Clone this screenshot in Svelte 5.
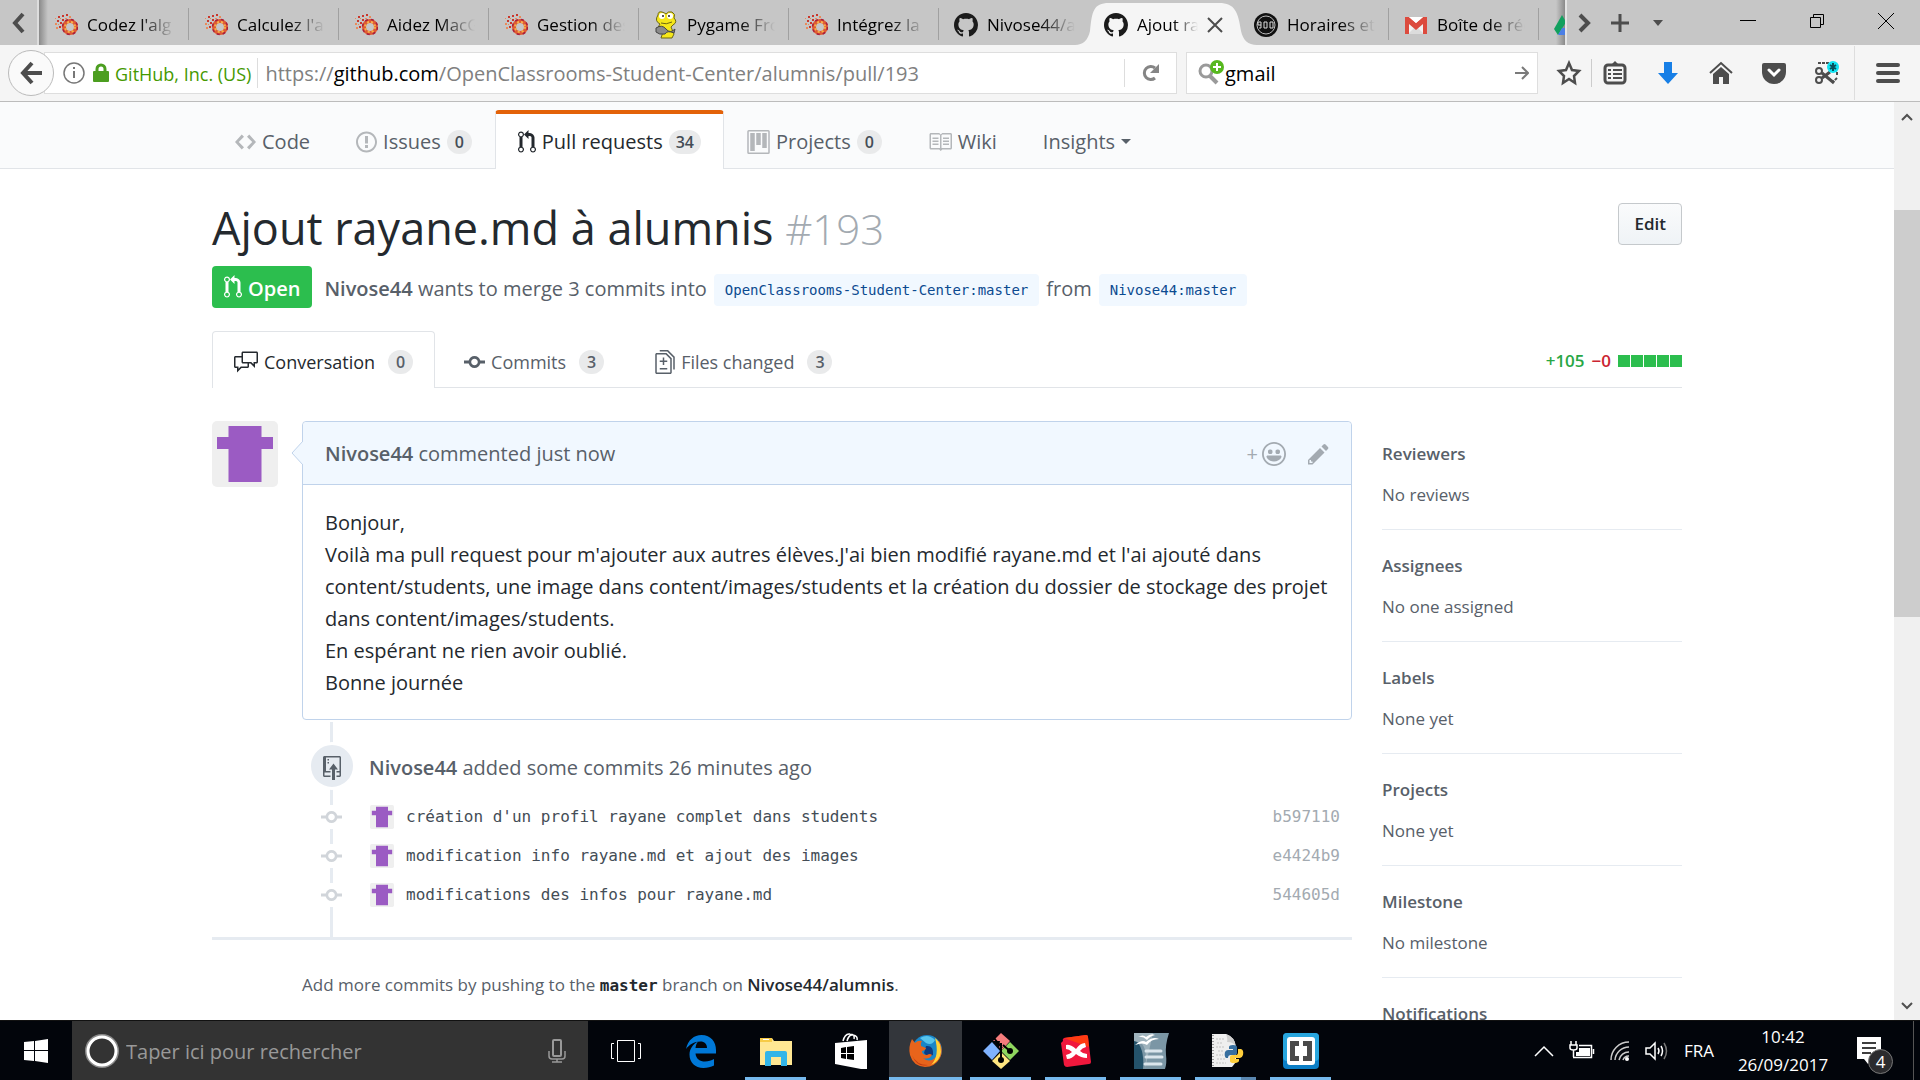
<script>
  const paths = {
    code: [14, 'M9.5 3L8 4.5 11.5 8 8 11.5 9.5 13 14 8 9.5 3zm-5 0L0 8l4.5 5L6 11.5 2.5 8 6 4.5 4.5 3z'],
    issue: [14, 'M7 2.3c3.14 0 5.7 2.56 5.7 5.7s-2.56 5.7-5.7 5.7A5.71 5.71 0 0 1 1.3 8c0-3.14 2.56-5.7 5.7-5.7zM7 1C3.14 1 0 4.14 0 8s3.14 7 7 7 7-3.14 7-7-3.14-7-7-7zm1 3H6v5h2V4zm0 6H6v2h2v-2z'],
    pull: [12, 'M11 11.28V5c-.03-.78-.34-1.47-.94-2.06C9.46 2.35 8.78 2.03 8 2H7V0L4 3l3 3V4h1c.27.02.48.11.69.31.21.2.3.42.31.69v6.28A1.993 1.993 0 0 0 10 15a1.993 1.993 0 0 0 1-3.72zm-1 2.92c-.66 0-1.2-.55-1.2-1.2 0-.65.55-1.2 1.2-1.2.65 0 1.2.55 1.2 1.2 0 .65-.55 1.2-1.2 1.2zM4 3c0-1.11-.89-2-2-2a1.993 1.993 0 0 0-1 3.72v6.56A1.993 1.993 0 0 0 2 15a1.993 1.993 0 0 0 1-3.72V4.72c.59-.34 1-.98 1-1.72zm-.8 10c0 .66-.55 1.2-1.2 1.2-.65 0-1.2-.55-1.2-1.2 0-.65.55-1.2 1.2-1.2.65 0 1.2.55 1.2 1.2zM2 4.2C1.34 4.2.8 3.65.8 3c0-.65.55-1.2 1.2-1.2.65 0 1.2.55 1.2 1.2 0 .65-.55 1.2-1.2 1.2z'],
    project: [15, 'M10 12h3V2h-3v10zm-4-2h3V2H6v8zm-4 4h3V2H2v12zm-1 1h13V1H1v14zM14 0H1a1 1 0 0 0-1 1v14a1 1 0 0 0 1 1h13a1 1 0 0 0 1-1V1a1 1 0 0 0-1-1z'],
    book: [16, 'M3 5h4v1H3V5zm0 3h4V7H3v1zm0 2h4V9H3v1zm11-5h-4v1h4V5zm0 2h-4v1h4V7zm0 2h-4v1h4V9zm2-6v9c0 .55-.45 1-1 1H9.5l-1 1-1-1H2c-.55 0-1-.45-1-1V3c0-.55.45-1 1-1h5.5l1 1 1-1H15c.55 0 1 .45 1 1zm-8 .5L7.5 3H2v9h6V3.5zm7-.5H9.5l-.5.5V12h6V3z'],
    talk: [16, 'M15 1H6c-.55 0-1 .45-1 1v2H1c-.55 0-1 .45-1 1v6c0 .55.45 1 1 1h1v3l3-3h4c.55 0 1-.45 1-1V9h1l3 3V9h1c.55 0 1-.45 1-1V2c0-.55-.45-1-1-1zM9 11H4.5L3 12.5V11H1V5h4v3c0 .55.45 1 1 1h3v2zm6-3h-2v1.5L11.5 8H6V2h9v6z'],
    commit: [14, 'M10.86 7c-.45-1.72-2-3-3.86-3-1.86 0-3.41 1.28-3.86 3H0v2h3.14c.45 1.72 2 3 3.86 3 1.86 0 3.41-1.28 3.86-3H14V7h-3.14zM7 10.2c-1.22 0-2.2-.98-2.2-2.2 0-1.22.98-2.2 2.2-2.2 1.22 0 2.2.98 2.2 2.2 0 1.22-.98 2.2-2.2 2.2z'],
    diff: [13, 'M6 7h2v1H6v2H5V8H3V7h2V5h1v2zm-3 6h5v-1H3v1zM7.5 2L11 5.5V15c0 .55-.45 1-1 1H1c-.55 0-1-.45-1-1V3c0-.55.45-1 1-1h6.5zM10 6L7 3H1v12h9V6zM8.5 0H3v1h5l4 4v8h1V4.5L8.5 0z'],
    smiley: [16, 'M8 0C3.58 0 0 3.58 0 8s3.58 8 8 8 8-3.58 8-8-3.58-8-8-8zm4.81 12.81a6.72 6.72 0 0 1-2.17 1.45c-.83.36-1.72.53-2.64.53-.92 0-1.81-.17-2.64-.53-.81-.34-1.55-.83-2.17-1.45a6.773 6.773 0 0 1-1.45-2.17A6.59 6.59 0 0 1 1.21 8c0-.92.17-1.81.53-2.64.34-.81.83-1.55 1.45-2.17.62-.62 1.36-1.11 2.17-1.45A6.59 6.59 0 0 1 8 1.21c.92 0 1.81.17 2.64.53.81.34 1.55.83 2.17 1.45.62.62 1.11 1.36 1.45 2.17.36.83.53 1.72.53 2.64 0 .92-.17 1.81-.53 2.64-.34.81-.83 1.55-1.45 2.17zM4 6.8v-.59c0-.66.53-1.19 1.2-1.19h.59c.66 0 1.19.53 1.19 1.19v.59c0 .67-.53 1.2-1.19 1.2H5.2C4.53 8 4 7.47 4 6.8zm5 0v-.59c0-.66.53-1.19 1.2-1.19h.59c.66 0 1.19.53 1.19 1.19v.59c0 .67-.53 1.2-1.19 1.2h-.59C9.53 8 9 7.47 9 6.8zm4 3.2c-.72 1.88-2.91 3-5 3s-4.28-1.13-5-3c-.14-.39.23-1 .66-1h8.59c.41 0 .89.61.75 1z'],
    pencil: [14, 'M0 12v3h3l8-8-3-3-8 8zm3 2H1v-2h1v1h1v1zm10.3-9.3L12 6 9 3l1.3-1.3a.996.996 0 0 1 1.41 0l1.59 1.59c.39.39.39 1.02 0 1.41z'],
    push: [12, 'M4 3H3V2h1v1zM3 5h1V4H3v1zm4 0L4 9h2v7h2V9h2L7 5zm4-5H1C.45 0 0 .45 0 1v12c0 .55.45 1 1 1h4v-1H1v-2h4v-1H2V1h9.02L11 10H9v1h2v2H9v1h2c.55 0 1-.45 1-1V1c0-.55-.45-1-1-1z'],
    github: [16, 'M8 0C3.58 0 0 3.58 0 8c0 3.54 2.29 6.53 5.47 7.59.4.07.55-.17.55-.38 0-.19-.01-.82-.01-1.49-2.01.37-2.53-.49-2.69-.94-.09-.23-.48-.94-.82-1.13-.28-.15-.68-.52-.01-.53.63-.01 1.08.58 1.23.82.72 1.21 1.87.87 2.33.66.07-.52.28-.87.51-1.07-1.78-.2-3.64-.89-3.64-3.95 0-.87.31-1.59.82-2.15-.08-.2-.36-1.02.08-2.12 0 0 .67-.21 2.2.82.64-.18 1.32-.27 2-.27.68 0 1.36.09 2 .27 1.53-1.04 2.2-.82 2.2-.82.44 1.1.16 1.92.08 2.12.51.56.82 1.27.82 2.15 0 3.07-1.87 3.75-3.65 3.95.29.25.54.73.54 1.48 0 1.07-.01 1.93-.01 2.2 0 .21.15.46.55.38A8.013 8.013 0 0 0 16 8c0-4.42-3.58-8-8-8z']
  };

  const tabs = [
    { icon: 'oc', title: "Codez l'alg" },
    { icon: 'oc', title: "Calculez l'a" },
    { icon: 'oc', title: 'Aidez MacG' },
    { icon: 'oc', title: 'Gestion des' },
    { icon: 'pygame', title: 'Pygame Fro' },
    { icon: 'oc', title: 'Intégrez la' },
    { icon: 'github', title: 'Nivose44/a' },
    { icon: 'github', title: 'Ajout ra', active: true },
    { icon: 'clock', title: 'Horaires et' },
    { icon: 'gmail', title: 'Boîte de réc' }
  ];

  const repoNav = [
    { icon: 'code', label: 'Code' },
    { icon: 'issue', label: 'Issues', count: 0 },
    { icon: 'pull', label: 'Pull requests', count: 34, active: true },
    { icon: 'project', label: 'Projects', count: 0 },
    { icon: 'book', label: 'Wiki' }
  ];

  const prTabs = [
    { icon: 'talk', label: 'Conversation', count: 0, active: true },
    { icon: 'commit', label: 'Commits', count: 3 },
    { icon: 'diff', label: 'Files changed', count: 3 }
  ];

  const commits = [
    { message: "création d'un profil rayane complet dans students", sha: 'b597110' },
    { message: 'modification info rayane.md et ajout des images', sha: 'e4424b9' },
    { message: 'modifications des infos pour rayane.md', sha: '544605d' }
  ];

  const sidebar = [
    { title: 'Reviewers', value: 'No reviews' },
    { title: 'Assignees', value: 'No one assigned' },
    { title: 'Labels', value: 'None yet' },
    { title: 'Projects', value: 'None yet' },
    { title: 'Milestone', value: 'No milestone' },
    { title: 'Notifications', value: '' }
  ];

  const apps = [
    { id: 'edge', name: 'Edge' },
    { id: 'files', name: 'Explorer', open: true },
    { id: 'store', name: 'Store' },
    { id: 'firefox', name: 'Firefox', open: true, active: true },
    { id: 'git', name: 'Git Bash', open: true },
    { id: 'xmind', name: 'XMind', open: true },
    { id: 'office', name: 'OpenOffice', open: true },
    { id: 'python', name: 'Python', open: true, stacked: true },
    { id: 'brackets', name: 'Brackets', open: true }
  ];
</script>

{#snippet oct(name, size = 24)}
  <svg class="oct" viewBox="0 0 {paths[name][0]} 16" height={size} width={Math.round((size * paths[name][0]) / 16)} aria-hidden="true">
    <path d={paths[name][1]} fill="currentColor" fill-rule="evenodd" />
  </svg>
{/snippet}

{#snippet identicon(size)}
  <svg class="identicon" viewBox="0 0 66 66" width={size} height={size} aria-hidden="true">
    <rect width="66" height="66" rx="5" fill="#efefef" />
    <path d="M16.500 5h33v11H61v12H49.500v33h-33V28H5V16h11.500z" fill="#9b5bc3" />
  </svg>
{/snippet}

{#snippet favicon(name)}
  {#if name === 'github'}
    {@render oct('github', 24)}
  {:else if name === 'oc'}
    <svg viewBox="0 0 24 24" width="24" height="24" aria-hidden="true">
      <circle cx="16" cy="14" r="6" fill="none" stroke="#de5a34" stroke-width="4" />
      <circle cx="16" cy="14" r="5" fill="none" stroke="#f6b04a" stroke-width="2" stroke-dasharray="2 2" />
      <circle cx="16" cy="14" r="7.500" fill="none" stroke="#a81f3c" stroke-width="1.500" stroke-dasharray="3 3" />
      <path d="M8 2h2v2H8zM12 1h2v2h-2zM4 3h2v2H4zM3 7h2v2H3zM6 9h2v2H6zM8 6h2v2H8zM5 13h2v2H5z" fill="#c9372c" />
      <path d="M1 5h1v1H1zM1 10h2v2H1zM4 11h1v1H4zM2 14h2v2H2zM11 5h2v1h-2zM6 5h1v1H6zM15 3h2v2h-2z" fill="#e98b5a" />
    </svg>
  {:else if name === 'pygame'}
    <svg viewBox="0 0 24 28" width="24" height="28" aria-hidden="true">
      <path d="M4 4Q4 0 8 1Q11 2 12 3Q14 0 18 1Q22 3 20 7Q24 11 19 14L17 16L20 23L18 27H7L9 21L3 18L6 13Q0 10 4 4z" fill="#f5e61a" stroke="#6b6614" stroke-width="1" />
      <circle cx="8" cy="5" r="3" fill="#fff" /><circle cx="16" cy="5" r="3" fill="#fff" />
      <circle cx="9" cy="5" r="1" fill="#222" /><circle cx="15" cy="5" r="1" fill="#222" />
      <path d="M2 17Q8 13 12 18T21 18L20 22Q13 19 11 23Q5 24 2 21z" fill="#8b8b8b" stroke="#444" stroke-width="1" />
      <path d="M7 12Q12 14 18 11" fill="none" stroke="#6b6614" />
    </svg>
  {:else if name === 'clock'}
    <svg viewBox="0 0 24 24" width="24" height="24" aria-hidden="true">
      <circle cx="12" cy="12" r="12" fill="#111" />
      <circle cx="12" cy="12" r="9" fill="none" stroke="#bbb" stroke-width="1" />
      <path d="M4 9h3v3H4V9M7 12v3H5M10 9h3v6h-3zM16 9h3v6h-3z" fill="none" stroke="#ddd" stroke-width="1" />
    </svg>
  {:else}
    <svg viewBox="0 0 24 24" width="24" height="24" aria-hidden="true">
      <path d="M2 4h20v17H2z" fill="#f2f2f2" />
      <path d="M4 21L12 13L20 21z" fill="#dcdcdc" />
      <path d="M1 21V5L12 14L23 5V21H19V11L12 17L5 11V21z" fill="#dc4b3e" />
      <path d="M1 4h4l7 6 7-6h4v3l-11 8L1 7z" fill="#dc4b3e" />
      <path d="M5 4h14l-7 6z" fill="#fff" />
    </svg>
  {/if}
{/snippet}

{#snippet appIcon(id)}
  <svg viewBox="0 0 36 36" width="36" height="36" aria-hidden="true">
    {#if id === 'edge'}
      <path d="M3 16C5 7 11 2 18.500 2C28 2 33 9 33 17V20.500H12.500C13 26 17 28.500 22 28.500C25.500 28.500 28.500 27.500 31 26V32.500C28 34 24.500 35 20.500 35C12 35 6.500 29.500 6.500 21.500C6.500 16 10 11 15 8.500C13.500 10.500 12.800 12.500 12.500 15H24C24 11 21.500 8.500 17.500 8.500C11 8.500 6 12 3 16z" fill="#0078d7" />
    {:else if id === 'files'}
      <path d="M2 5h12l2 3h18v24H2z" fill="#ffe793" />
      <path d="M2 5h12v4H2z" fill="#f7cb46" /><path d="M5 6h6v1H5z" fill="#fff" />
      <path d="M7 20q0-2 2-2h18q2 0 2 2v13h-6v-9h-10v9H7z" fill="#33b5e8" />
    {:else if id === 'store'}
      <path d="M10 8Q12 0 17 1Q22 1 21 6M14 8Q16 1 20 2Q25 3 24 7" fill="none" stroke="#fff" stroke-width="1.500" />
      <path d="M2 10L34 7V36L28 36L2 31z" fill="#fff" />
      <path d="M8 15l5-1v6H8zM14 14l7-1v7h-7zM8 21h5v5l-5-1zM14 21h7v6l-7-1z" fill="#000" />
    {:else if id === 'firefox'}
      <circle cx="19" cy="17" r="15" fill="#1a86c8" />
      <path d="M12 5Q20 0 27 7Q24 13 18 10z" fill="#58c4ec" /><path d="M18 13Q26 12 25 22Q19 25 16 20z" fill="#0c3b82" />
      <path d="M31 8Q36 17 32 25Q27 34 17 34Q5 33 2 22Q0 14 4 6L7 10Q10 7 14 8Q12 10 13 13L18 15Q18 17 14 18Q14 22 19 22Q22 20 24 22Q21 27 15 25Q21 30 27 25Q32 20 28 9z" fill="#e8641b" />
      <path d="M27 5Q33 9 33 19Q32 28 23 32Q32 23 27 5z" fill="#ffd43a" />
      <path d="M4 22Q8 32 20 32Q9 35 4 22z" fill="#c53a12" />
    {:else if id === 'git'}
      <path d="M18 0l9 8-8 9-3-3 1-6-7 0z" fill="#f57c7c" /><path d="M27 9l9 9-9 9-9-9 4-4z" fill="#8fd65e" />
      <path d="M9 9l8 9-8 9-9-9z" fill="#80b3ff" /><path d="M18 19l9 9-9 8-9-8z" fill="#ffe680" />
      <path d="M11 5L19 15M18 10v17M20 12l8 7" stroke="#000" stroke-width="2" />
      <circle cx="18" cy="27" r="3" fill="#000" /><circle cx="27" cy="18" r="3" fill="#000" />
    {:else if id === 'xmind'}
      <path d="M5 8Q4 6 6 5L28 2Q30 2 30 4L33 29Q33 31 31 31L9 34Q7 34 6 32L3 10z" fill="#f0183d" />
      <path d="M6 5L28 2Q30 2 30 4L31 14Z" fill="#ff3b12" />
      <path d="M8 12Q12 11 18 16Q22 10 27 10L28 14Q24 15 22 18Q25 21 29 21L29 25Q23 25 18 21Q14 26 9 26L8 22Q12 21 14 19Q11 16 8 16z" fill="#fff" />
    {:else if id === 'office'}
      <path d="M1 0H36Q32 12 33 22Q34 30 32 36H1z" fill="#7b96a5" />
      <path d="M1 6Q12 14 10 36H1z" fill="#24526a" /><path d="M12 36Q15 16 8 10L1 8V0H20Z" fill="#9fb3bd" />
      <path d="M2 12Q9 6 13 9Q20 3 26 6Q18 6 14 12Q10 9 2 12zM5 4Q10 1 13 4Q18 0 22 2Q17 3 14 7Q10 3 5 4z" fill="#fff" />
      <path d="M13 18h15M13 24h16M12 31h16" stroke="#dbe5ec" stroke-width="3" stroke-linecap="round" />
    {:else if id === 'python'}
      <path d="M4 1H18Q27 4 28 14V29L24 34H4z" fill="#efefef" />
      <path d="M18 1Q20 7 19 9Q26 9 28 14Q27 4 18 1z" fill="#cfcfcf" />
      <path d="M5 2v31" stroke="#999" stroke-width="2" stroke-dasharray="1 2" />
      <path d="M8 6h8M9 10h6M8 14h9M10 18h6M8 22h7M9 26h9M8 30h10" stroke="#c3c3c3" stroke-dasharray="2 1" />
      <path d="M21 14q0-2 4-2t4 2v6q0 2-3 2h-3q-3 0-3 3h-2q-2-2-1-6q1-2 3-2h5v-1h-4z" fill="#376f9f" />
      <path d="M30 16h3q3 1 2 6q-1 3-3 3h-5v1h4v2q-1 2-5 2t-4-2v-4q0-2 3-2h3q2 0 2-3z" fill="#ffcf3c" />
    {:else}
      <rect width="36" height="36" rx="4" fill="#0b7ec6" /><rect width="36" height="28" rx="4" fill="#28a6de" />
      <rect x="4" y="4" width="28" height="28" rx="3" fill="#fff" />
      <path d="M7 8h9v5h-4v10h4v5H7zM29 8h-9v5h4v10h-4v5h9z" fill="#4a4a4a" />
    {/if}
  </svg>
{/snippet}

<div class="desktop">
  <header class="tabstrip">
    <button class="scroll left" aria-label="Scroll tabs left">
      <svg viewBox="0 0 16 24" width="16" height="24"><path d="M12 3L4 12l8 9" fill="none" stroke="#4d4d4d" stroke-width="4" /></svg>
    </button>
    <div class="tabs">
      {#each tabs as tab, i}
        <button class="tab" class:active={tab.active} class:nosep={i === 6}>
          {#if tab.active}
            <svg class="shape" viewBox="0 0 190 45" width="190" height="45" aria-hidden="true">
              <path d="M0 45C8 45 13 40 15 31C17 12 18 3 34 3H144C160 3 163 12 166 31C168 40 173 45 182 45z" fill="#f5f5f5" />
            </svg>
          {/if}
          <span class="fav">{@render favicon(tab.icon)}</span>
          <span class="tab-title">{tab.title}</span>
          {#if tab.active}
            <svg class="close" viewBox="0 0 16 16" width="16" height="16" aria-hidden="true"><path d="M1 1l14 14M15 1L1 15" stroke="#4d4d4d" stroke-width="2" /></svg>
          {/if}
        </button>
      {/each}
      <button class="tab cut" aria-label="Drive">
        <svg viewBox="0 0 24 24" width="24" height="24"><path d="M8 2L0 16L4 22L12 9z" fill="#11a05e" /><path d="M4 22L8 15H24L20 22z" fill="#4b7fe5" /></svg>
      </button>
    </div>
    <button class="scroll right" aria-label="Scroll tabs right">
      <svg viewBox="0 0 16 24" width="16" height="24"><path d="M4 4l8 8-8 8" fill="none" stroke="#4d4d4d" stroke-width="4" /></svg>
    </button>
    <button class="tool" aria-label="New tab">
      <svg viewBox="0 0 20 20" width="20" height="20"><path d="M10 1v18M1 10h18" stroke="#4d4d4d" stroke-width="3" /></svg>
    </button>
    <button class="tool" aria-label="List all tabs">
      <svg viewBox="0 0 12 8" width="12" height="8"><path d="M1 1h10L6 7z" fill="#4d4d4d" /></svg>
    </button>
    <div class="window">
      <button aria-label="Minimize"><svg viewBox="0 0 16 16" width="16" height="16"><path d="M0 7.500h16" stroke="#000" /></svg></button>
      <button aria-label="Restore"><svg viewBox="0 0 16 16" width="16" height="16"><path d="M1.500 4.500h10v10h-10zM4.500 4V1.500h10v10H12" fill="none" stroke="#000" /></svg></button>
      <button aria-label="Close"><svg viewBox="0 0 16 16" width="16" height="16"><path d="M0 0l16 16M16 0L0 16" stroke="#000" /></svg></button>
    </div>
  </header>

  <div class="toolbar">
    <button class="back" aria-label="Back">
      <svg viewBox="0 0 24 24" width="24" height="24"><path d="M13 2L4 12l9 10M4 12h19" fill="none" stroke="#4d4d4d" stroke-width="4" /></svg>
    </button>
    <div class="urlbar">
      <svg viewBox="0 0 22 22" width="22" height="22" aria-hidden="true"><circle cx="11" cy="11" r="10" fill="none" stroke="#777" stroke-width="1.500" /><path d="M11 9v7M11 5v2" stroke="#777" stroke-width="2" /></svg>
      <svg class="lock" viewBox="0 0 16 20" width="16" height="20" aria-hidden="true"><path d="M4 9V6a4 4 0 0 1 8 0v3" fill="none" stroke="#4c9e20" stroke-width="3" /><rect y="8" width="16" height="11" rx="1" fill="#4c9e20" /></svg>
      <span class="owner">GitHub, Inc. (US)</span>
      <div class="url" role="textbox" tabindex="0" aria-label="Address"><span>https://</span><b>github.com</b><span>/OpenClassrooms-Student-Center/alumnis/pull/193</span></div>
      <button class="reload" aria-label="Reload">
        <svg viewBox="0 0 20 20" width="20" height="20"><path d="M14 15A6.500 6.500 0 1 1 14 5" fill="none" stroke="#858585" stroke-width="3" /><path d="M18 1v9H9z" fill="#858585" /></svg>
      </button>
    </div>
    <div class="searchbar">
      <svg viewBox="0 0 28 28" width="28" height="28" aria-hidden="true"><circle cx="9" cy="12" r="6" fill="none" stroke="#9a9a9a" stroke-width="3" /><path d="M13 17l7 7" stroke="#9a9a9a" stroke-width="4" /><circle cx="20" cy="8" r="7" fill="#57b81f" /><path d="M20 4v8M16 8h8" stroke="#fff" stroke-width="2" /></svg>
      <input aria-label="Search" value="gmail" />
      <svg viewBox="0 0 14 14" width="14" height="14" aria-hidden="true"><path d="M0 7h12M7 1l6 6-6 6" fill="none" stroke="#7a7a7a" stroke-width="2" /></svg>
    </div>
    <button class="star" aria-label="Bookmark">
      <svg viewBox="0 0 26 26" width="26" height="26"><path d="M13 3l3 7 7 1-5 5 1 7-6-4-6 4 1-7-5-5 7-1z" fill="none" stroke="#4d4d4d" stroke-width="2.500" /></svg>
    </button>
    <button class="list" aria-label="Bookmarks list">
      <svg viewBox="0 0 24 24" width="24" height="24"><path d="M8 4l4-4 4 4z" fill="#4d4d4d" /><rect x="2" y="4" width="20" height="18" rx="3" fill="none" stroke="#4d4d4d" stroke-width="3" /><path d="M5 9h3M10 9h9M5 13h3M10 13h9M5 17h3M10 17h9" stroke="#4d4d4d" stroke-width="2" /></svg>
    </button>
    <button class="nav" aria-label="Downloads"><svg viewBox="0 0 24 24" width="24" height="24"><path d="M8 1h8v11h6L12 23 2 12h6z" fill="#177fe6" /></svg></button>
    <button class="nav" aria-label="Home"><svg viewBox="0 0 24 24" width="24" height="24"><path d="M1 12L12 2l11 10" fill="none" stroke="#4d4d4d" stroke-width="2" /><path d="M12 6l8 7v10h-6v-7h-4v7H4V13z" fill="#4d4d4d" /></svg></button>
    <button class="nav" aria-label="Pocket"><svg viewBox="0 0 24 24" width="24" height="24"><path d="M2 2h20q2 0 2 2v7a12 12 0 0 1-24 0V4q0-2 2-2z" fill="#4d4d4d" /><path d="M7 9l5 5 5-5" fill="none" stroke="#fff" stroke-width="3" stroke-linecap="round" /></svg></button>
    <button class="nav" aria-label="Capture"><svg viewBox="0 0 26 26" width="26" height="26"><path d="M4 3h12M23 12v4M23 18l-4 4" stroke="#4d4d4d" stroke-width="2" stroke-dasharray="3 1" /><circle cx="5" cy="11" r="3" fill="none" stroke="#4d4d4d" stroke-width="2" /><circle cx="5" cy="20" r="3" fill="none" stroke="#4d4d4d" stroke-width="2" /><path d="M8 13l12 10M8 18l8-6" stroke="#4d4d4d" stroke-width="3" /><circle cx="19" cy="7" r="6" fill="#12e3f2" /><path d="M19 3v8M16 5l6 4M22 5l-6 4" stroke="#07505c" stroke-width="2" /></svg></button>
    <button class="menu" aria-label="Menu"><svg viewBox="0 0 24 24" width="24" height="24"><path d="M2 4h20M2 12h20M2 20h20" stroke="#4d4d4d" stroke-width="4" stroke-linecap="round" /></svg></button>
  </div>

  <div class="viewport">
    <div class="page">
      <nav class="repohead" aria-label="Repository">
        <div class="container reponav">
          {#each repoNav as item}
            <a href="#{item.icon}" class:selected={item.active}>
              {@render oct(item.icon)}<span>{item.label}</span>
              {#if item.count !== undefined}<span class="counter">{item.count}</span>{/if}
            </a>
          {/each}
          <a href="#insights"><span>Insights</span><i class="caret"></i></a>
        </div>
      </nav>

      <main class="container">
        <div class="title-row">
          <h1>Ajout rayane.md à alumnis <span>#193</span></h1>
          <button class="edit">Edit</button>
        </div>
        <div class="meta">
          <span class="state">{@render oct('pull')}<span class="label">Open</span></span>
          <span class="label"><a class="author" href="#author">Nivose44</a> wants to merge 3 commits into</span>
          <span class="ref">OpenClassrooms-Student-Center:master</span>
          <span class="label">from</span>
          <span class="ref">Nivose44:master</span>
        </div>

        <nav class="tabnav" aria-label="Pull request">
          {#each prTabs as item}
            <a href="#{item.icon}" class:selected={item.active}>
              {@render oct(item.icon)}<span>{item.label}</span><span class="counter">{item.count}</span>
            </a>
          {/each}
          <div class="diffstat">
            <span class="add">+105</span>
            <span class="del">−0</span>
            <span class="blocks">{#each [1, 2, 3, 4, 5] as _}<i></i>{/each}</span>
          </div>
        </nav>

        <div class="columns">
          <section class="discussion">
            <div class="comment-row">
              {@render identicon(66)}
              <article class="comment">
                <svg class="arrow" viewBox="0 0 12 24" width="12" height="24" aria-hidden="true"><path d="M12 0L1 12l11 12" fill="#f1f8ff" stroke="#c0d3eb" /></svg>
                <header>
                  <span><a class="author" href="#author">Nivose44</a> commented just now</span>
                  <div class="actions">
                    <button class="react" aria-label="Add reaction"><span>+</span>{@render oct('smiley')}</button>
                    <button aria-label="Edit comment">{@render oct('pencil')}</button>
                  </div>
                </header>
                <p>
                  Bonjour,<br />
                  Voilà ma pull request pour m'ajouter aux autres élèves.J'ai bien modifié rayane.md et l'ai ajouté dans
                  content/students, une image dans content/images/students et la création du dossier de stockage des projet
                  dans content/images/students.<br />
                  En espérant ne rien avoir oublié.<br />
                  Bonne journée
                </p>
              </article>
            </div>

            <div class="timeline">
              <div class="push">
                <span class="bubble">{@render oct('push')}</span>
                <span class="label"><a class="author" href="#author">Nivose44</a> added some commits 26 minutes ago</span>
              </div>
              <ul>
                {#each commits as c}
                  <li>
                    <span class="node">{@render oct('commit')}</span>
                    {@render identicon(24)}
                    <a class="message" href="#{c.sha}">{c.message}</a>
                    <a class="sha" href="#{c.sha}">{c.sha}</a>
                  </li>
                {/each}
              </ul>
            </div>
            <p class="hint">Add more commits by pushing to the <code>master</code> branch on <b>Nivose44/alumnis</b>.</p>
          </section>

          <aside>
            {#each sidebar as s}
              <section><h2>{s.title}</h2><p>{s.value}</p></section>
            {/each}
          </aside>
        </div>
      </main>
    </div>
    <div class="scrollbar" aria-hidden="true">
      <svg viewBox="0 0 12 12" width="12" height="12"><path d="M1 9l5-5 5 5" fill="none" stroke="#505050" stroke-width="2" /></svg>
      <div class="track"><div class="thumb"></div></div>
      <svg viewBox="0 0 12 12" width="12" height="12"><path d="M1 3l5 5 5-5" fill="none" stroke="#505050" stroke-width="2" /></svg>
    </div>
  </div>

  <footer class="taskbar">
    <button class="start" aria-label="Start"><svg viewBox="0 0 24 24" width="24" height="24"><path d="M0 3l10-1v9H0zM11 2l13-2v11H11zM0 12h10v10L0 21zM11 12h13v12l-13-2z" fill="#fff" /></svg></button>
    <label class="cortana">
      <svg viewBox="0 0 34 34" width="34" height="34" aria-hidden="true"><circle cx="17" cy="17" r="15" fill="none" stroke="#8a8a8a" stroke-width="4" /><circle cx="17" cy="17" r="14" fill="none" stroke="#fff" stroke-width="3" /></svg>
      <input placeholder="Taper ici pour rechercher" aria-label="Rechercher" />
      <svg viewBox="0 0 18 24" width="18" height="24" aria-hidden="true"><rect x="5" y="1" width="8" height="16" rx="1" fill="none" stroke="#999" stroke-width="2" /><path d="M1 12v5q0 3 3 3h10q3 0 3-3v-5M9 20v3M4 23h10" fill="none" stroke="#999" stroke-width="1.500" /></svg>
    </label>
    <button class="taskview" aria-label="Task view"><svg viewBox="0 0 32 24" width="32" height="24"><path d="M7.500 1.500h17v21h-17zM4 4.500H1.500v15H4M28 4.500h2.500v15H28" fill="none" stroke="#fff" stroke-width="1" /></svg></button>
    {#each apps as app}
      <button class="app" class:open={app.open} class:active={app.active} class:stacked={app.stacked} aria-label={app.name}>{@render appIcon(app.id)}</button>
    {/each}
    <div class="tray">
      <svg viewBox="0 0 20 12" width="20" height="12" aria-hidden="true"><path d="M1 11l9-9 9 9" fill="none" stroke="#fff" stroke-width="1.500" /></svg>
      <svg viewBox="0 0 26 20" width="26" height="20" aria-hidden="true"><path d="M2 0v4M7 0v4M1 4h7v3q0 2-3.500 2T1 7zM4.500 9v7" fill="none" stroke="#fff" stroke-width="1.500" /><path d="M10 4.500h12.500v12H4M24.500 8v5" fill="none" stroke="#fff" stroke-width="1.500" /><path d="M10 7h11v8H7v-4h3z" fill="#fff" /></svg>
      <svg viewBox="0 0 20 20" width="20" height="20" aria-hidden="true"><path d="M1 19A18 18 0 0 1 19 1M5 19A14 14 0 0 1 19 6M9 19A10 10 0 0 1 19 11M13 19a6 6 0 0 1 6-4" fill="none" stroke="#ccc" stroke-width="1.500" /><circle cx="17" cy="18" r="2" fill="#fff" /></svg>
      <svg viewBox="0 0 24 20" width="24" height="20" aria-hidden="true"><path d="M1 7h4l5-5v16l-5-5H1z" fill="none" stroke="#fff" stroke-width="1.500" /><path d="M13 7q2 3 0 6M16 5q3 5 0 10" fill="none" stroke="#fff" stroke-width="1.500" /><path d="M19 2q5 8 0 16" fill="none" stroke="#777" stroke-width="1.500" /></svg>
      <span class="lang">FRA</span>
      <time>10:42<br />26/09/2017</time>
      <div class="notice">
        <svg viewBox="0 0 24 28" width="24" height="28" aria-hidden="true"><path d="M0 0h24v22H15l-4 5-4-5H0z" fill="#fff" /><path d="M5 6h14M5 11h14M5 16h9" stroke="#000" stroke-width="1.500" /></svg>
        <span>4</span>
      </div>
    </div>
  </footer>
</div>

<style>
  :global(body) { margin: 0; }
  .desktop, .desktop * { box-sizing: border-box; }
  .desktop { display: flex; flex-direction: column; height: 100vh; overflow: hidden; background: #fff; color: #24292e; font: 20px/32px "Open Sans", "Noto Sans", sans-serif; }
  svg { display: block; flex: none; }
  button { margin: 0; padding: 0; border: 0; background: none; font: inherit; color: inherit; }
  button, .window, .tabs { display: flex; align-items: center; justify-content: center; }
  input { min-width: 0; flex: 1; padding: 2px 0 0; border: 0; outline: 0; background: none; font: inherit; color: #000; }
  a { color: inherit; text-decoration: none; }
  h1, h2, p, ul { margin: 0; padding: 0; font-weight: 400; list-style: none; }
  .label { padding-top: 3px; }

  .tabstrip { display: flex; flex: none; height: 45px; background: #c6c6c6; }
  .scroll.left { flex: none; width: 39px; border-right: 2px solid #ddd; }
  .scroll.right { flex: none; width: 36px; border-left: 2px solid #e4e4e4; }
  .tabs { flex: 1; min-width: 0; justify-content: flex-start; overflow: hidden; background: linear-gradient(90deg, #8a8a8a, #c6c6c6 9px calc(100% - 9px), #8a8a8a); }
  .tab { position: relative; flex: 0 0 150px; min-width: 0; justify-content: flex-start; height: 45px; padding: 4px 14px 0 15px; gap: 9px; font-size: 17px; line-height: 32px; color: #000; }
  .tab::after { content: ""; position: absolute; right: 0; top: 8px; width: 1px; height: 32px; background: #a0a0a0; }
  .tab.active::after, .tab.nosep::after { display: none; }
  .fav { position: relative; display: flex; flex: none; justify-content: center; width: 24px; color: #1b1b1b; }
  .tab-title { position: relative; flex: 1; min-width: 0; overflow: hidden; text-align: left; white-space: nowrap; -webkit-mask-image: linear-gradient(90deg, #000 60%, transparent); mask-image: linear-gradient(90deg, #000 60%, transparent); }
  .tab.cut { flex: 0 0 39px; }
  .tab.cut::after { display: none; }
  .shape { position: absolute; left: -14px; top: 0; }
  .tab.active { z-index: 1; }
  .tab.active .tab-title { flex: 0 0 61px; }
  .close { position: relative; }
  .tool { flex: none; width: 38px; }
  .window { flex: none; margin-left: 36px; height: 42px; }
  .window button { width: 69px; height: 40px; }

  .toolbar { display: flex; flex: none; align-items: center; height: 57px; padding: 0 0 0 8px; background: #f5f5f5; border-bottom: 1px solid #bcbcbc; }
  .back { position: relative; z-index: 1; flex: none; width: 46px; height: 46px; border: 1px solid #bbb; border-radius: 50%; background: #fafafa; }
  .urlbar, .searchbar { display: flex; align-items: center; height: 42px; border: 1px solid #dedede; background: #fff; }
  .urlbar { flex: 1; min-width: 0; margin-left: -10px; padding-left: 18px; }
  .lock { margin: 0 6px 0 8px; }
  .owner { padding: 2px 6px 0 0; border-right: 1px solid #ddd; color: #459900; font-size: 18px; line-height: 28px; white-space: nowrap; }
  .url { flex: 1; padding: 2px 0 0 7px; overflow: hidden; color: #808080; white-space: nowrap; }
  .url b { font-weight: 400; color: #000; }
  .reload { width: 52px; height: 28px; border-left: 1px solid #ddd; }
  .searchbar { flex: 0 0 352px; margin-left: 9px; padding: 0 8px 0 10px; }
  .star { width: 54px; height: 28px; padding-left: 8px; border-right: 1px solid #ccc; }
  .list { width: 45px; margin-right: 4px; }
  .nav { width: 53px; }
  .menu { width: 66px; height: 54px; margin-left: 1px; border-left: 1px solid #ddd; }

  .viewport { display: flex; flex: 1; min-height: 0; }
  .page { flex: 1; min-width: 0; overflow: hidden; }
  .container { width: 1470px; max-width: 100%; margin: 0 auto; }
  .repohead { background: #fafbfc; border-bottom: 1px solid #e1e4e8; padding-top: 8px; }
  .reponav { display: flex; color: #586069; }
  .reponav a { display: flex; align-items: center; gap: 6px; height: 59px; margin-bottom: -1px; padding: 4px 22px 0; border: solid transparent; border-width: 0 1px; }
  .reponav a .oct { color: #b4b7ba; }
  .reponav a.selected { padding-top: 0; border-color: #e1e4e8; border-top: 4px solid #e36209; border-radius: 4px 4px 0 0; background: #fff; color: #24292e; }
  .reponav a.selected .oct { color: #24292e; }
  .counter { min-width: 25px; padding: 0 7px; border-radius: 12px; background: #e9eaeb; color: #444d56; font-size: 16px; font-weight: 600; line-height: 24px; text-align: center; }
  .caret { border: 5px solid transparent; border-top-color: currentColor; border-bottom: 0; }

  main { padding-top: 32px; color: #586069; }
  .title-row { display: flex; justify-content: space-between; align-items: flex-start; }
  h1 { color: #24292e; font-size: 45px; line-height: 54px; }
  h1 span { color: #a3aab1; font-size: 42px; font-weight: 300; }
  .edit { height: 42px; margin-top: 2px; padding: 0 15px; border: 1px solid #c5c9cc; border-radius: 4px; background: linear-gradient(#fafbfc, #eff3f6); color: #24292e; font-size: 17px; font-weight: 600; }
  .meta { display: flex; align-items: center; gap: 7px; margin-top: 10px; white-space: nowrap; }
  .state { display: flex; align-items: center; gap: 6px; height: 42px; margin-right: 5px; padding: 0 12px; border-radius: 4px; background: #2cbe4e; color: #fff; font-weight: 600; }
  .author { font-weight: 600; }
  .ref { margin-top: 5px; padding: 0 11px; border-radius: 4px; background: #f1f8ff; color: #0b4a90; font: 14px/32px "DejaVu Sans Mono", monospace; }

  .tabnav { display: flex; align-items: flex-end; gap: 7px; height: 57px; margin: 23px 0 30px; border-bottom: 1px solid #e1e4e8; font-size: 18px; }
  .tabnav a { display: flex; align-items: center; gap: 6px; height: 57px; margin-bottom: -1px; padding: 4px 21px 0; border: 1px solid transparent; border-bottom: 0; }
  .tabnav a.selected { border-color: #e1e4e8; border-radius: 4px 4px 0 0; background: #fff; color: #24292e; }
  .tabnav .counter { margin-left: 7px; color: #586069; }
  .diffstat { display: flex; align-items: center; gap: 7px; margin-left: auto; align-self: center; padding-top: 3px; font-size: 17px; font-weight: 600; }
  .add { color: #28a745; }
  .del { color: #cb2431; }
  .blocks { display: flex; gap: 1px; }
  .blocks i { width: 12px; height: 12px; background: #2cbe4e; }

  .columns { display: flex; gap: 30px; }
  .discussion { flex: 1; min-width: 0; padding-top: 3px; }
  .comment-row { display: flex; align-items: flex-start; gap: 24px; }
  .comment { position: relative; flex: 1; border: 1px solid #c0d3eb; border-radius: 4px; color: #24292e; }
  .arrow { position: absolute; left: -12px; top: 19px; }
  .comment header { display: flex; justify-content: space-between; align-items: center; height: 63px; padding: 2px 22px 0; border-bottom: 1px solid #c0d3eb; border-radius: 4px 4px 0 0; background: #f1f8ff; color: #586069; }
  .comment p { padding: 22px 22px 20px; }
  .actions { display: flex; gap: 22px; color: #a3aab1; }
  .react { gap: 4px; }

  .timeline { margin: 2px 0 0 90px; padding: 20px 0 23px; background: linear-gradient(#e6ebf1, #e6ebf1) 28px 0 / 3px 100% no-repeat; }
  .push { display: flex; align-items: center; gap: 13px; padding-left: 6px; }
  .bubble { display: flex; align-items: center; justify-content: center; width: 48px; height: 48px; border: 3px solid #fff; border-radius: 50%; background: #e6ebf1; }
  .bubble .oct { margin-top: 4px; }
  ul { padding-top: 7px; }
  li { display: flex; align-items: center; height: 39px; padding: 0 12px 0 19px; font: 16px/24px "DejaVu Sans Mono", monospace; }
  .node { margin-right: 28px; background: #fff; color: #d1d5da; }
  .message { flex: 1; margin-left: 12px; color: #444d56; white-space: nowrap; }
  .sha { color: #a3aab1; }
  .hint { position: relative; padding: 35px 0 40px 90px; font-size: 17px; line-height: 26px; }
  .hint::before { content: ""; position: absolute; inset: 0 0 auto; height: 3px; background: #e6ebf1; }
  .hint code { color: #24292e; font: bold 16px "DejaVu Sans Mono", monospace; }
  .hint b { color: #24292e; font-weight: 600; }

  aside { flex: 0 0 300px; font-size: 17px; line-height: 26px; }
  aside section { padding: 23px 0 21px; border-bottom: 1px solid #e6ebf1; }
  aside h2 { margin-bottom: 15px; font-size: 17px; font-weight: 600; }

  .scrollbar { display: flex; flex: 0 0 26px; flex-direction: column; align-items: center; padding: 9px 0 8px; background: #f0f0f0; }
  .track { flex: 1; width: 100%; margin: 5px 0; }
  .thumb { height: 47%; margin-top: 82px; background: #cdcdcd; }

  .taskbar { display: flex; flex: none; height: 60px; background: #02050b; color: #fff; border-top: 1px solid #111; }
  .start { width: 72px; }
  .cortana { display: flex; align-items: center; flex: 0 0 516px; padding: 0 22px 0 13px; gap: 7px; background: #333; }
  .cortana input { color: #fff; }
  .cortana input::placeholder { color: #999; opacity: 1; }
  .taskview { width: 75px; }
  .app { position: relative; width: 75px; }
  .app.active::before { content: ""; position: absolute; inset: 0 1px; z-index: 0; background: #33363b; }
  .app svg { position: relative; }
  .app.open::after { content: ""; position: absolute; left: 7px; right: 7px; bottom: 0; height: 3px; background: #76b9ed; }
  .app.active::after { left: 1px; right: 1px; }
  .app.stacked::after { background: linear-gradient(90deg, #76b9ed 46px, #5a87b0 46px); }
  .tray { display: flex; align-items: center; margin-left: auto; margin-right: 6px; padding-right: 22px; border-right: 1px solid #555; gap: 15px; font-size: 17px; }
  time { width: 96px; margin-left: 6px; line-height: 28px; text-align: center; }
  .notice { position: relative; width: 36px; padding-left: 2px; margin-left: 9px; }
  .notice span { position: absolute; left: 13px; top: 12px; width: 25px; height: 25px; border: 1px solid #777; border-radius: 50%; background: #2b2b2e; line-height: 23px; text-align: center; }
</style>
